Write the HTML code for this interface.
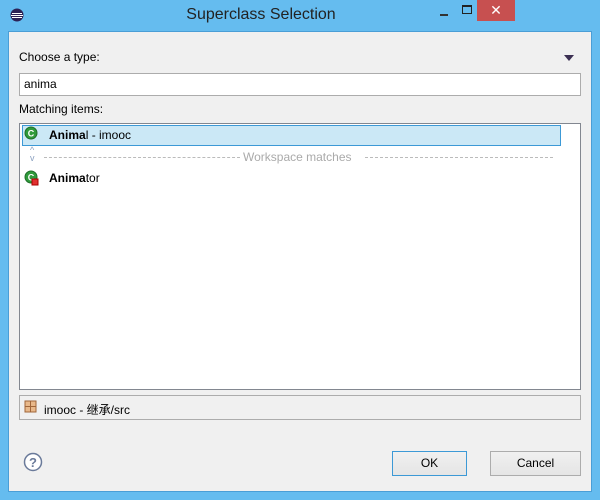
<!DOCTYPE html><html><head><style>
body{margin:0;width:600px;height:500px;background:#65bcef;font-family:"Liberation Sans","Noto Sans CJK SC",sans-serif;font-size:12px;color:#000;position:relative;overflow:hidden}
.a{position:absolute}
.c{left:8px;top:31px;width:584px;height:461px;background:#f0f0f0;border:1px solid #4a9ed6;box-sizing:border-box}
.btn{background:linear-gradient(#f0f0f0,#e5e5e5);border:1px solid #acacac;box-sizing:border-box;text-align:center;line-height:23px}
</style></head><body>
<svg class="a" style="left:9px;top:7px" width="16" height="16"><circle cx="8" cy="8" r="6.5" fill="#2c2255"/><path d="M3 6.5h10M2 8.5h12M3 10.5h10" stroke="#fff" stroke-width="1"/></svg>
<div class="a" style="left:0;top:6px;width:522px;text-align:center;font-size:16px;color:#222">Superclass Selection</div>
<div class="a" style="left:440px;top:14px;width:8px;height:2px;background:#333"></div>
<div class="a" style="left:462px;top:5px;width:8px;height:6px;border:1px solid #222;border-top-width:2px"></div>
<div class="a" style="left:477px;top:0;width:38px;height:21px;background:#c75050;color:#fff;text-align:center;font-size:14px;line-height:21px">✕</div>
<div class="a c"></div>
<div class="a" style="left:19px;top:50px">Choose a type:</div>
<div class="a" style="left:564px;top:55px;width:0;height:0;border-left:5px solid transparent;border-right:5px solid transparent;border-top:6px solid #3b2f52"></div>
<div class="a" style="left:19px;top:73px;width:562px;height:23px;background:#fff;border:1px solid #acacac;box-sizing:border-box;padding:3px 0 0 4px">anima</div>
<div class="a" style="left:19px;top:102px">Matching items:</div>
<div class="a" style="left:19px;top:123px;width:562px;height:267px;background:#fff;border:1px solid #828790;box-sizing:border-box"></div>
<div class="a" style="left:22px;top:125px;width:539px;height:21px;background:#cbe8f6;border:1px solid #3c99d6;box-sizing:border-box"></div>
<svg class="a" style="left:24px;top:126px" width="14" height="14"><circle cx="7" cy="7" r="6" fill="#2f9a3b" stroke="#1e6e29"/><text x="7" y="10.5" font-size="9" font-weight="bold" fill="#fff" text-anchor="middle" font-family="Liberation Sans">C</text></svg>
<div class="a" style="left:49px;top:128px"><b>Anima</b>l - imooc</div>
<div class="a" style="left:30px;top:146px;color:#8aa0c0;font-size:9px;line-height:8px">^<br>v</div>
<div class="a" style="left:44px;top:157px;width:196px;border-top:1px dashed #bbb"></div>
<div class="a" style="left:243px;top:150px;color:#aaa">Workspace matches</div>
<div class="a" style="left:365px;top:157px;width:188px;border-top:1px dashed #bbb"></div>
<svg class="a" style="left:24px;top:170px" width="16" height="16"><circle cx="7" cy="7" r="6" fill="#2f9a3b" stroke="#1e6e29"/><text x="7" y="10.5" font-size="9" font-weight="bold" fill="#fff" text-anchor="middle" font-family="Liberation Sans">C</text><rect x="8" y="9" width="6" height="6" fill="#e03030" stroke="#a00"/></svg>
<div class="a" style="left:49px;top:171px"><b>Anima</b>tor</div>
<div class="a" style="left:19px;top:395px;width:562px;height:25px;border:1px solid #acacac;box-sizing:border-box"></div>
<svg class="a" style="left:24px;top:400px" width="14" height="14"><rect x="1" y="1" width="11" height="11" fill="#e8b88a" stroke="#a0663a"/><path d="M6.5 1v11M1 6.5h11" stroke="#a0663a"/></svg>
<div class="a" style="left:44px;top:401px">imooc - 继承/src</div>
<svg class="a" style="left:23px;top:452px" width="20" height="20"><circle cx="10" cy="10" r="8.5" fill="#fff" stroke="#6a7a9a" stroke-width="1.5"/><text x="10" y="15" font-size="13" font-weight="bold" fill="#6a7a9a" text-anchor="middle" font-family="Liberation Sans">?</text></svg>
<div class="a btn" style="left:392px;top:451px;width:75px;height:25px;border-color:#3c99d6">OK</div>
<div class="a btn" style="left:490px;top:451px;width:91px;height:25px">Cancel</div>
</body></html>
